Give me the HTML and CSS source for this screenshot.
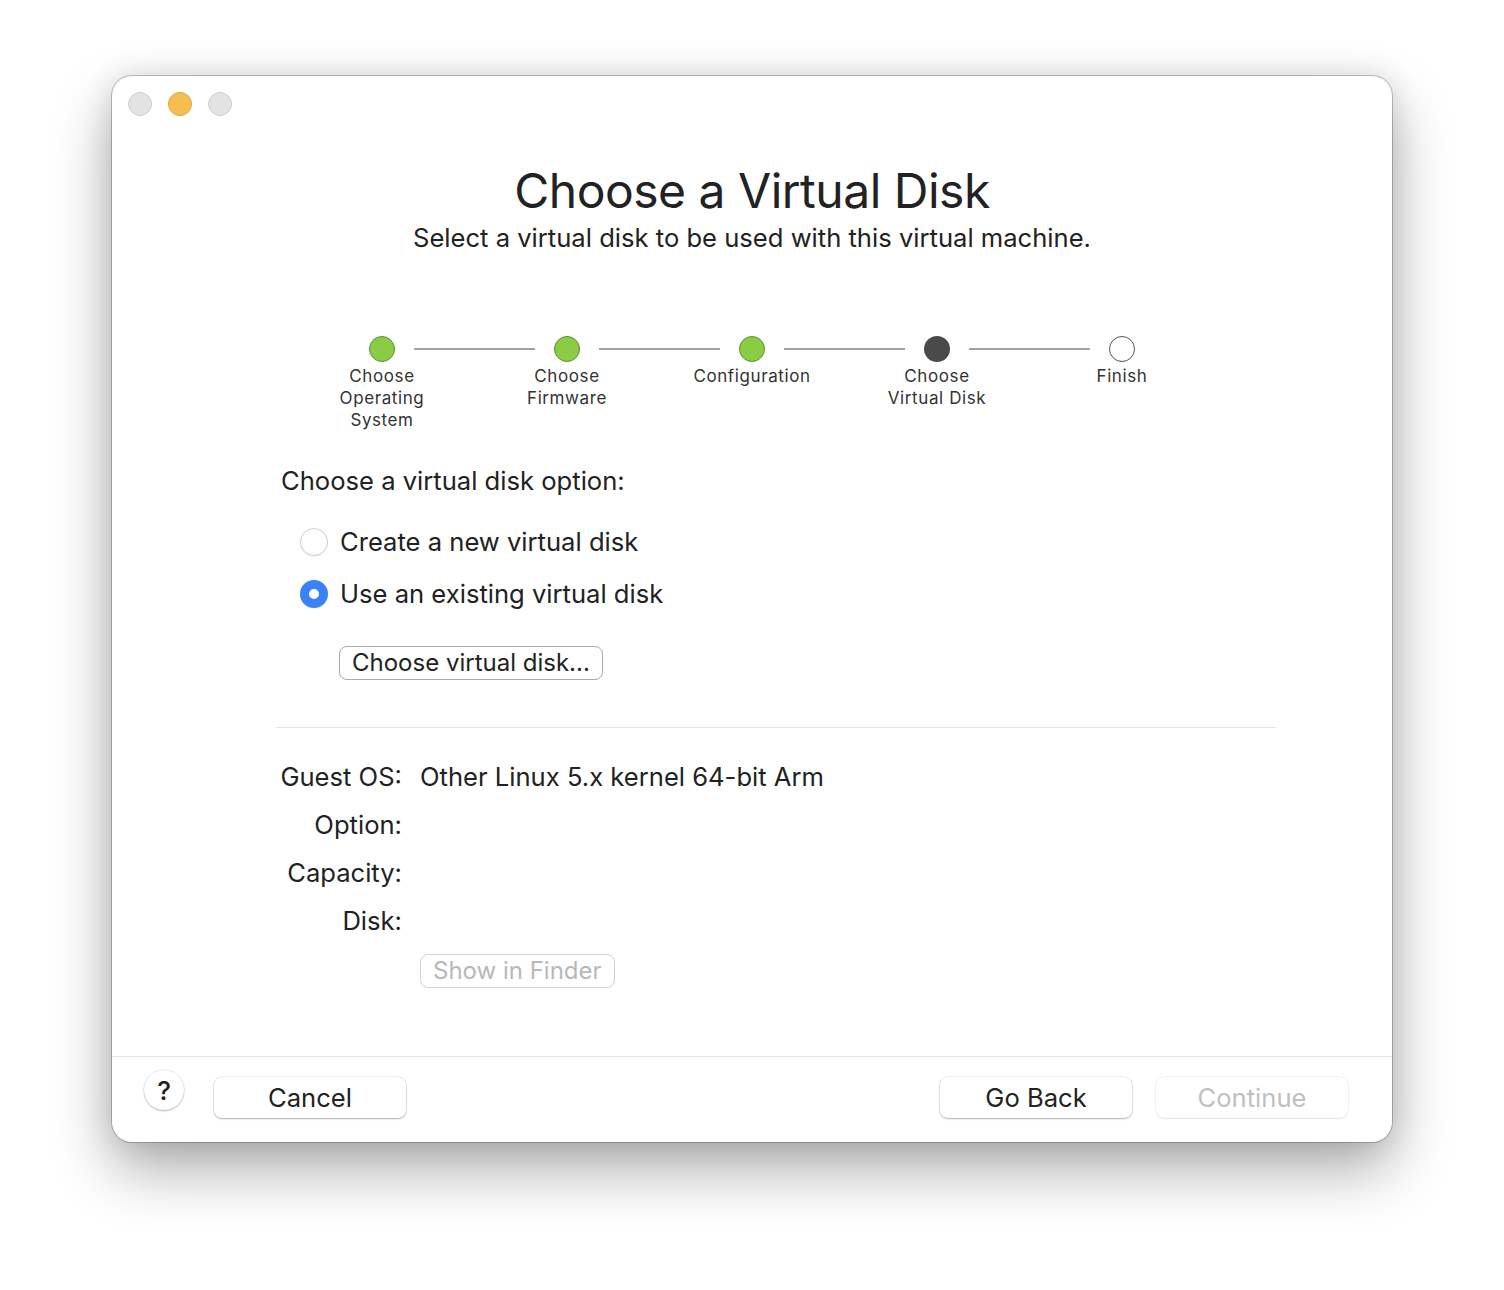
FILE: index.html
```html
<!DOCTYPE html>
<html>
<head>
<meta charset="utf-8">
<link rel="stylesheet" href="styles.css">
</head>
<body>
<div class="window">
  <div class="titlebar">
    <span class="light gray"></span>
    <span class="light yellow"></span>
    <span class="light gray"></span>
  </div>
  <div class="content">
    <h1 class="title">Choose a Virtual Disk</h1>
    <p class="subtitle">Select a virtual disk to be used with this virtual machine.</p>

    <div class="steps">
      <div class="step link">
        <span class="dot done"></span>
        <span class="step-label">Choose<br>Operating<br>System</span>
      </div>
      <div class="step link">
        <span class="dot done"></span>
        <span class="step-label">Choose<br>Firmware</span>
      </div>
      <div class="step link">
        <span class="dot done"></span>
        <span class="step-label">Configuration</span>
      </div>
      <div class="step link">
        <span class="dot current"></span>
        <span class="step-label">Choose<br>Virtual Disk</span>
      </div>
      <div class="step">
        <span class="dot todo"></span>
        <span class="step-label">Finish</span>
      </div>
    </div>

    <div class="options">
      <div class="section-label">Choose a virtual disk option:</div>
      <label class="radio-row first"><span class="radio"></span><span>Create a new virtual disk</span></label>
      <label class="radio-row"><span class="radio checked"></span><span>Use an existing virtual disk</span></label>
      <div class="choose-row"><span class="btn-small">Choose virtual disk...</span></div>
    </div>

    <div class="separator"></div>

    <div class="info">
      <span class="info-label">Guest OS:</span><span class="info-value">Other Linux 5.x kernel 64-bit Arm</span>
      <span class="info-label">Option:</span><span class="info-value"></span>
      <span class="info-label">Capacity:</span><span class="info-value"></span>
      <span class="info-label">Disk:</span><span class="info-value"></span>
      <span class="info-label"></span><span class="info-value"><span class="btn-small disabled">Show in Finder</span></span>
    </div>
  </div>
  <div class="footer">
    <span class="help">?</span>
    <span class="btn">Cancel</span>
    <span class="spacer"></span>
    <span class="btn">Go Back</span>
    <span class="btn disabled">Continue</span>
  </div>
</div>
</body>
</html>
```

FILE: styles.css
```css
html, body {
  margin: 0;
  padding: 0;
  background: #ffffff;
}
body {
  font-family: Inter, "Noto Sans", "Liberation Sans", sans-serif;
  color: #222222;
  padding: 76px 0 148px 112px;
  min-height: 1290px;
  box-sizing: border-box;
}
.window {
  width: 1280px;
  height: 1066px;
  background: #ffffff;
  border-radius: 20px;
  box-shadow: 0 0 0 1px rgba(0,0,0,0.22), 0 28px 60px rgba(0,0,0,0.32), 0 0 30px rgba(0,0,0,0.12);
  display: flex;
  flex-direction: column;
  overflow: hidden;
}
.titlebar {
  display: flex;
  gap: 16px;
  padding: 16px 0 0 16px;
  height: 40px;
  box-sizing: border-box;
}
.light {
  width: 24px;
  height: 24px;
  border-radius: 50%;
  box-sizing: border-box;
}
.light.gray { background: #e3e3e3; border: 1px solid #cccccc; }
.light.yellow { background: #f4bf4f; border: 1px solid #dca63b; }
.content {
  flex: 1;
  display: flex;
  flex-direction: column;
}
.title {
  margin: 45px 0 0;
  text-align: center;
  font-size: 48px;
  font-weight: 400;
  letter-spacing: -0.5px;
  line-height: 60px;
  color: #222;
}
.subtitle {
  margin: 0;
  text-align: center;
  font-size: 25.6px;
  line-height: 34px;
  color: #222;
}
.steps {
  display: grid;
  grid-template-columns: repeat(5, 185px);
  justify-content: center;
  margin-top: 81px;
}
.step {
  position: relative;
  display: flex;
  flex-direction: column;
  align-items: center;
}
.step.link::after {
  content: "";
  position: absolute;
  top: 12px;
  left: calc(50% + 32px);
  width: 121px;
  height: 2px;
  background: #a3a3a3;
}
.dot {
  width: 26px;
  height: 26px;
  border-radius: 50%;
  box-sizing: border-box;
  margin-bottom: 3px;
}
.dot.done { background: #8acd45; border: 1px solid #5d8e30; }
.dot.current { background: #4a4a4a; }
.dot.todo { background: #fff; border: 1px solid #555; }
.step-label {
  font-size: 17px;
  line-height: 22px;
  text-align: center;
  letter-spacing: 0.6px;
  color: #333;
}
.options {
  margin: 35px 0 0 169px;
  display: flex;
  flex-direction: column;
}
.section-label {
  font-size: 25.6px;
  line-height: 30px;
}
.radio-row {
  display: flex;
  align-items: center;
  gap: 12px;
  margin-left: 19px;
  font-size: 25.6px;
  line-height: 30px;
  height: 52px;
}
.radio-row.first { margin-top: 20px; }
.radio {
  width: 28px;
  height: 28px;
  border-radius: 50%;
  box-sizing: border-box;
  background: #fff;
  border: 1px solid #cfcfcf;
  box-shadow: 0 1px 1px rgba(0,0,0,0.05);
}
.radio.checked {
  border: 9px solid #3b82f6;
  background: #fff;
}
.choose-row {
  margin: 26px 0 0 58px;
}
.btn-small {
  display: inline-block;
  font-size: 24px;
  line-height: 32px;
  padding: 0 12px;
  border: 1.5px solid #aaaaaa;
  border-radius: 8px;
  background: #fff;
  color: #222;
}
.btn-small.disabled {
  color: #b8b8b8;
  border-color: #d2d2d2;
}
.separator {
  margin: 47px 0 0 164px;
  width: 1000px;
  height: 1px;
  background: #e2e2e2;
}
.info {
  margin: 34px 0 0 159px;
  display: grid;
  grid-template-columns: 131px auto;
  column-gap: 18px;
  row-gap: 18px;
  font-size: 25.6px;
  line-height: 30px;
  justify-content: start;
}
.info-label { text-align: right; white-space: nowrap; }
.info-value { white-space: nowrap; }
.info-value .btn-small { margin-top: 0; }
.footer {
  height: 86px;
  border-top: 1px solid #e4e4e4;
  display: flex;
  align-items: flex-start;
  padding: 20px 44px 0 32px;
  box-sizing: border-box;
  gap: 24px;
}
.help {
  width: 40px;
  height: 40px;
  border-radius: 50%;
  background: #fff;
  box-shadow: 0 0 0 0.5px rgba(0,0,0,0.12), 0 1px 2px rgba(0,0,0,0.25);
  display: flex;
  align-items: center;
  justify-content: center;
  font-size: 26px;
  font-weight: 500;
  color: #222;
  margin-right: 6px;
  margin-top: -7px;
}
.btn {
  width: 192px;
  height: 41px;
  border-radius: 8px;
  background: #fff;
  box-shadow: 0 0 0 0.5px rgba(0,0,0,0.12), 0 1px 2px rgba(0,0,0,0.28);
  display: flex;
  align-items: center;
  justify-content: center;
  font-size: 25.6px;
  color: #222;
}
.btn.disabled {
  color: #c0c0c0;
  box-shadow: 0 0 0 0.5px rgba(0,0,0,0.1), 0 1px 1px rgba(0,0,0,0.06);
}
.spacer { flex: 1; }
```
